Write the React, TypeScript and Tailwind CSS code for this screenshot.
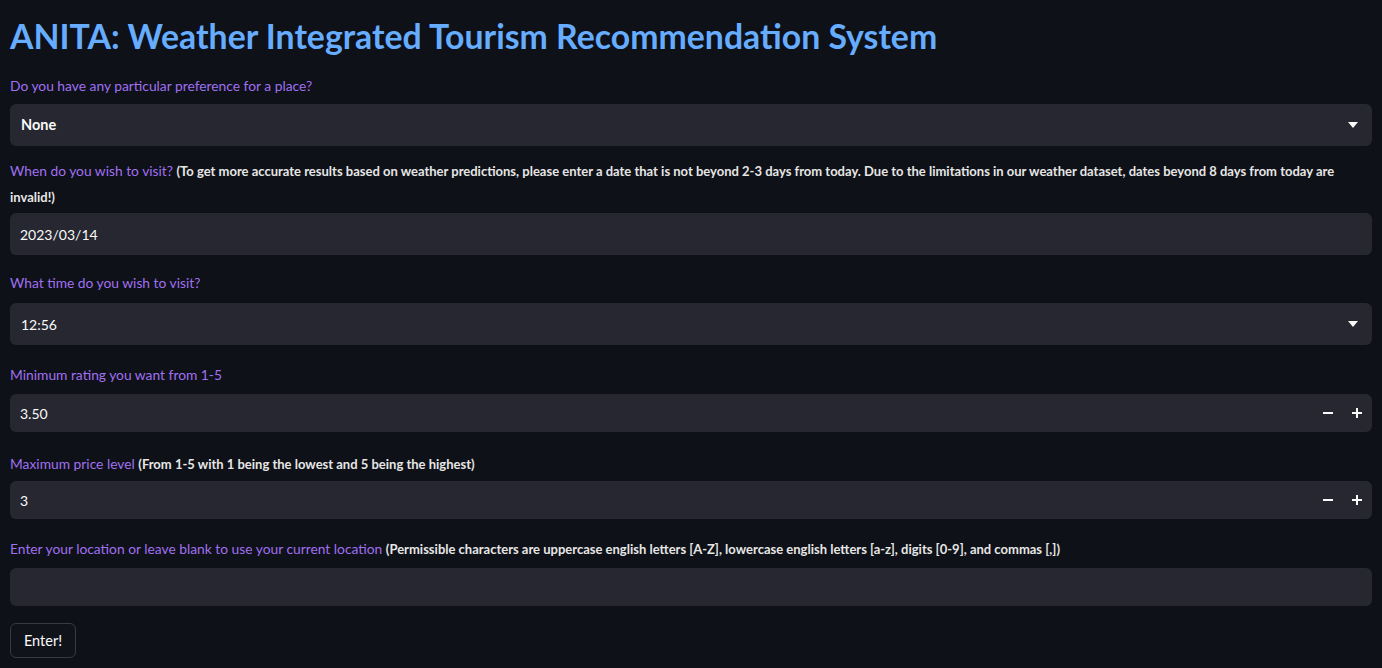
function Caret() {
  return (
    <svg width="10" height="6" viewBox="0 0 10 6" className="shrink-0">
      <path d="M0 0 L10 0 L5 6 Z" fill="#fafafa" />
    </svg>
  );
}

function Stepper() {
  return (
    <div className="flex items-center gap-[19px] pr-[10px]">
      <svg width="10" height="10" viewBox="0 0 10 10">
        <rect x="0" y="4" width="10" height="2" fill="#fafafa" />
      </svg>
      <svg width="10" height="10" viewBox="0 0 10 10">
        <rect x="0" y="4" width="10" height="2" fill="#fafafa" />
        <rect x="4" y="0" width="2" height="10" fill="#fafafa" />
      </svg>
    </div>
  );
}

export default function App() {
  return (
    <div className="min-h-screen bg-[#0e1117] text-[#fafafa] font-['Lato',sans-serif] px-[10px]">
      <h1 className="pt-[14px] text-[33.8px] leading-[44px] font-bold text-[#66acff]">
        ANITA: Weather Integrated Tourism Recommendation System
      </h1>

      <div className="mt-[18px] text-[13.8px] leading-[20px] text-[#a070f2]">
        Do you have any particular preference for a place?
      </div>
      <div className="mt-[8px] h-[42px] rounded-[6px] bg-[#262730] flex items-center justify-between pl-[11px] pr-[14px]">
        <span className="text-[14.5px] font-bold">None</span>
        <Caret />
      </div>

      <div className="mt-[12px] text-[13.8px] leading-[26px] pr-[10px]">
        <span className="text-[#a070f2]">When do you wish to visit?</span>{" "}
        <span className="font-bold text-[13px] text-[#e6e6e6]">
          (To get more accurate results based on weather predictions, please enter a date that is not beyond 2-3 days from today. Due to the limitations in our weather dataset, dates beyond 8 days from today are invalid!)
        </span>
      </div>
      <div className="mt-[3px] h-[42px] rounded-[6px] bg-[#262730] flex items-center pl-[10px]">
        <span className="text-[14px]">2023/03/14</span>
      </div>

      <div className="mt-[18px] text-[13.8px] leading-[20px] text-[#a070f2]">
        What time do you wish to visit?
      </div>
      <div className="mt-[10px] h-[42px] rounded-[6px] bg-[#262730] flex items-center justify-between pl-[11px] pr-[14px]">
        <span className="text-[14px]">12:56</span>
        <Caret />
      </div>

      <div className="mt-[20px] text-[13.8px] leading-[20px] text-[#a070f2]">
        Minimum rating you want from 1-5
      </div>
      <div className="mt-[9px] h-[38px] rounded-[6px] bg-[#262730] flex items-center justify-between pl-[10px]">
        <span className="text-[14px]">3.50</span>
        <Stepper />
      </div>

      <div className="mt-[22px] text-[13.8px] leading-[20px]">
        <span className="text-[#a070f2]">Maximum price level</span>{" "}
        <span className="font-bold text-[13px] text-[#e6e6e6]">(From 1-5 with 1 being the lowest and 5 being the highest)</span>
      </div>
      <div className="mt-[7px] h-[38px] rounded-[6px] bg-[#262730] flex items-center justify-between pl-[10px]">
        <span className="text-[14px]">3</span>
        <Stepper />
      </div>

      <div className="mt-[20px] text-[13.8px] leading-[20px]">
        <span className="text-[#a070f2]">Enter your location or leave blank to use your current location</span>{" "}
        <span className="font-bold text-[13px] text-[#e6e6e6]">
          (Permissible characters are uppercase english letters [A-Z], lowercase english letters [a-z], digits [0-9], and commas [,])
        </span>
      </div>
      <div className="mt-[9px] h-[38px] rounded-[6px] bg-[#262730]" />

      <button className="mt-[17px] h-[35px] w-[66px] rounded-[6px] border border-[#383a43] bg-[#10131a] text-[14.5px] text-[#fafafa] flex items-center justify-center">
        Enter!
      </button>
    </div>
  );
}
